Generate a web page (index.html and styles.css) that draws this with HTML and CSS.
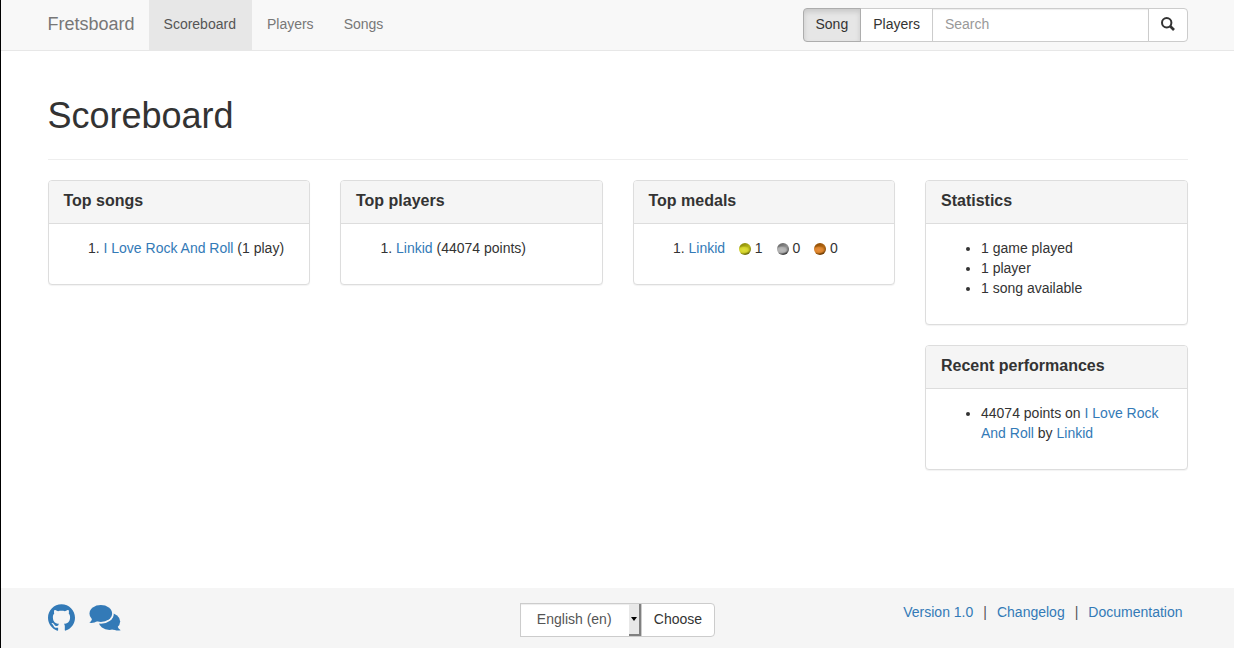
FILE: index.html
```html
<!DOCTYPE html>
<html lang="en">
<head>
<meta charset="utf-8">
<meta name="viewport" content="width=device-width, initial-scale=1">
<title>Fretsboard - Scoreboard</title>
<link rel="stylesheet" href="styles.css">
</head>
<body>
<header class="navbar">
  <div class="container navbar-inner">
    <a class="brand" href="#">Fretsboard</a>
    <nav class="nav">
      <a class="nav-link active" href="#" aria-current="page">Scoreboard</a>
      <a class="nav-link" href="#">Players</a>
      <a class="nav-link" href="#">Songs</a>
    </nav>
    <form class="search" role="search">
      <button class="btn btn-first pressed" type="button" aria-pressed="true">Song</button>
      <button class="btn" type="button" aria-pressed="false">Players</button>
      <input class="search-input" type="search" placeholder="Search" aria-label="Search">
      <button class="btn btn-last" type="submit" aria-label="Run search">
        <svg class="search-icon" viewBox="0 0 14 14" aria-hidden="true"><circle cx="5.700" cy="5.700" r="4.700" fill="none" stroke="currentColor" stroke-width="2"/><path d="M9 9l4 4" fill="none" stroke="currentColor" stroke-width="2.600"/></svg>
      </button>
    </form>
  </div>
</header>

<main class="container main">
  <h1 class="page-title">Scoreboard</h1>
  <div class="columns">
    <div class="column">
      <section class="panel">
        <h2 class="panel-title">Top songs</h2>
        <ol class="list">
          <li><a href="#">I Love Rock And Roll</a> (1 play)</li>
        </ol>
      </section>
    </div>
    <div class="column">
      <section class="panel">
        <h2 class="panel-title">Top players</h2>
        <ol class="list">
          <li><a href="#">Linkid</a> (44074 points)</li>
        </ol>
      </section>
    </div>
    <div class="column">
      <section class="panel">
        <h2 class="panel-title">Top medals</h2>
        <ol class="list">
          <li><a href="#">Linkid</a>
            <span class="medal gold"></span> 1
            <span class="medal silver"></span> 0
            <span class="medal bronze"></span> 0</li>
        </ol>
      </section>
    </div>
    <div class="column">
      <section class="panel">
        <h2 class="panel-title">Statistics</h2>
        <ul class="list">
          <li>1 game played</li>
          <li>1 player</li>
          <li>1 song available</li>
        </ul>
      </section>
      <section class="panel">
        <h2 class="panel-title">Recent performances</h2>
        <ul class="list">
          <li>44074 points on <a href="#">I Love Rock And Roll</a> by <a href="#">Linkid</a></li>
        </ul>
      </section>
    </div>
  </div>
</main>

<footer class="footer">
  <div class="container footer-inner">
    <div class="social">
      <a href="#" aria-label="GitHub"><svg class="github" viewBox="0 0 24 24" aria-hidden="true"><path fill="currentColor" d="M12 .297c-6.63 0-12 5.373-12 12 0 5.303 3.438 9.8 8.205 11.385.6.113.82-.258.82-.577 0-.285-.01-1.040-.015-2.040-3.338.724-4.042-1.610-4.042-1.610C4.422 18.070 3.633 17.700 3.633 17.700c-1.087-.744.084-.729.084-.729 1.205.084 1.838 1.236 1.838 1.236 1.070 1.835 2.809 1.305 3.495.998.108-.776.417-1.305.76-1.605-2.665-.3-5.466-1.332-5.466-5.930 0-1.310.465-2.380 1.235-3.220-.135-.303-.54-1.523.105-3.176 0 0 1.005-.322 3.300 1.230.96-.267 1.980-.399 3-.405 1.020.006 2.040.138 3 .405 2.280-1.552 3.285-1.230 3.285-1.230.645 1.653.24 2.873.12 3.176.765.84 1.230 1.910 1.230 3.220 0 4.610-2.805 5.625-5.475 5.920.42.36.81 1.096.81 2.220 0 1.606-.015 2.896-.015 3.286 0 .315.21.69.825.57C20.565 22.092 24 17.592 24 12.297c0-6.627-5.373-12-12-12"/></svg></a>
      <a href="#" aria-label="Discussion"><svg class="comments" viewBox="0 0 32 29" aria-hidden="true"><g fill="currentColor"><ellipse cx="20.500" cy="18.500" rx="10.700" ry="8.500"/><path d="M23 26c2-.5 4-1.500 5.500-3 .5 1.800 1.500 3.200 3.200 4.200-3 .6-6 .2-8.700-1.200z"/></g><ellipse cx="12" cy="10.700" rx="12.800" ry="10" fill="#f5f5f5"/><g fill="currentColor"><ellipse cx="11.800" cy="10.500" rx="11.300" ry="8.500"/><path d="M3 15c0 2-1 3.600-2.700 4.800 3 .5 5.700-.2 8.200-1.800z"/></g></svg></a>
    </div>
    <form class="language">
      <div class="select-wrap">
        <select class="select" aria-label="Language"><option>English (en)</option></select>
        <span class="select-arrow" aria-hidden="true"></span>
      </div>
      <button class="btn btn-last" type="button">Choose</button>
    </form>
    <nav class="links">
      <a href="#">Version 1.0</a><span>|</span><a href="#">Changelog</a><span>|</span><a href="#">Documentation</a>
    </nav>
  </div>
</footer>
</body>
</html>
```

FILE: styles.css
```css
*, *::before, *::after {
  box-sizing: border-box;
}

body {
  display: flex;
  flex-direction: column;
  min-height: 100vh;
  margin: 0;
  border-left: 1px solid #000;
  background: #fff;
  color: #333;
  font: 14px/20px "Liberation Sans", Arial, sans-serif;
}

a {
  color: #337ab7;
  text-decoration: none;
}

.container {
  width: 100%;
  max-width: 1170px;
  margin: 0 auto;
  padding: 0 15px;
}

.navbar {
  background: #f8f8f8;
  border-bottom: 1px solid #e7e7e7;
}

.navbar-inner {
  display: flex;
  flex-wrap: wrap;
}

.brand {
  padding: 14px 14px 16px 0;
  color: #777;
  font-size: 18px;
}

.nav {
  display: flex;
}

.nav-link {
  padding: 14px 15px 16px;
  color: #777;
}

.nav-link.active {
  padding: 14px 16px 16px 15px;
  background: #e7e7e7;
  color: #555;
}

.search {
  display: flex;
  flex: 0 1 385px;
  margin: 8px 0 8px auto;
}

.btn {
  height: 34px;
  margin: 0 0 0 -1px;
  padding: 5px 12px 7px;
  border: 1px solid #ccc;
  background: #fff;
  color: #333;
  font: inherit;
  cursor: pointer;
}

.btn-first {
  margin-left: 0;
  border-radius: 4px 0 0 4px;
}

.btn-last {
  border-radius: 0 4px 4px 0;
}

.btn.pressed {
  z-index: 1;
  border-color: #adadad;
  background: #e6e6e6;
  box-shadow: inset 0 3px 5px rgba(0, 0, 0, 0.125);
}

.search-input {
  flex: 1;
  min-width: 0;
  height: 34px;
  margin: 0 0 0 -1px;
  padding: 5px 12px 7px;
  border: 1px solid #ccc;
  border-radius: 0;
  background: #fff;
  box-shadow: inset 0 1px 1px rgba(0, 0, 0, 0.075);
  color: #555;
  font: inherit;
  appearance: none;
}

.search-input::placeholder {
  color: #999;
}

.search-icon {
  display: block;
  width: 14px;
  height: 14px;
}

.main {
  flex: 1;
}

.page-title {
  margin: 45px 0 20px;
  padding-bottom: 23px;
  border-bottom: 1px solid #eee;
  font-size: 36px;
  font-weight: 400;
  line-height: 40px;
}

.columns {
  display: grid;
  grid-template-columns: repeat(4, minmax(0, 1fr));
  gap: 30px;
}

.panel {
  margin-bottom: 20px;
  border: 1px solid #ddd;
  border-radius: 4px;
  background: #fff;
  box-shadow: 0 1px 1px rgba(0, 0, 0, 0.05);
}

.panel-title {
  margin: 0;
  padding: 11px 15px 13px;
  border-bottom: 1px solid #ddd;
  border-radius: 3px 3px 0 0;
  background: #f5f5f5;
  font-size: 16px;
  font-weight: 700;
  line-height: 18px;
}

.list {
  margin: 0;
  padding: 14px 15px 26px 55px;
}

.medal {
  display: inline-block;
  width: 12px;
  height: 12px;
  margin-left: 10px;
  border-radius: 50%;
  vertical-align: -2px;
}

.gold {
  background: radial-gradient(ellipse 7px 4px at 40% 58%, #e0e03c, #d4d42c 60%, transparent), linear-gradient(150deg, #94940c 20%, #b4b418 50%, #66660a 88%);
}

.silver {
  background: radial-gradient(ellipse 7px 4px at 40% 58%, #bcbcbc, #b0b0b0 60%, transparent), linear-gradient(150deg, #707070 20%, #909090 50%, #333 88%);
}

.bronze {
  background: radial-gradient(ellipse 7px 4px at 40% 58%, #e89040, #dc842c 60%, transparent), linear-gradient(150deg, #985408 20%, #b46814 50%, #663804 88%);
}

.footer {
  background: #f5f5f5;
}

.footer-inner {
  display: grid;
  grid-template-columns: 1fr auto 1fr;
  padding-top: 15px;
  padding-bottom: 11px;
}

.social {
  display: flex;
  gap: 14px;
}

.social svg {
  display: block;
}

.github {
  width: 27px;
  height: 29px;
}

.comments {
  width: 32px;
  height: 29px;
}

.language {
  display: flex;
}

.select-wrap {
  position: relative;
}

.select {
  width: 122px;
  height: 34px;
  margin: 0;
  padding: 0 24px 2px 16px;
  border: 1px solid #ccc;
  border-radius: 0;
  background: #fff;
  box-shadow: inset 0 1px 1px rgba(0, 0, 0, 0.075);
  color: #555;
  font: inherit;
  appearance: none;
}

.select-arrow {
  position: absolute;
  top: 1px;
  right: 1px;
  bottom: 1px;
  display: grid;
  place-items: center;
  width: 12px;
  border: solid #808080;
  border-width: 0 2px 2px 0;
  background: #e8e8e8;
  pointer-events: none;
}

.select-arrow::before {
  content: "";
  border: 3px solid transparent;
  border-top: 4px solid #000;
  border-bottom: 0;
}

.links {
  display: flex;
  justify-content: flex-end;
  gap: 10px;
  padding: 0 5px 0 0;
  color: #555;
  line-height: 18px;
}
```
